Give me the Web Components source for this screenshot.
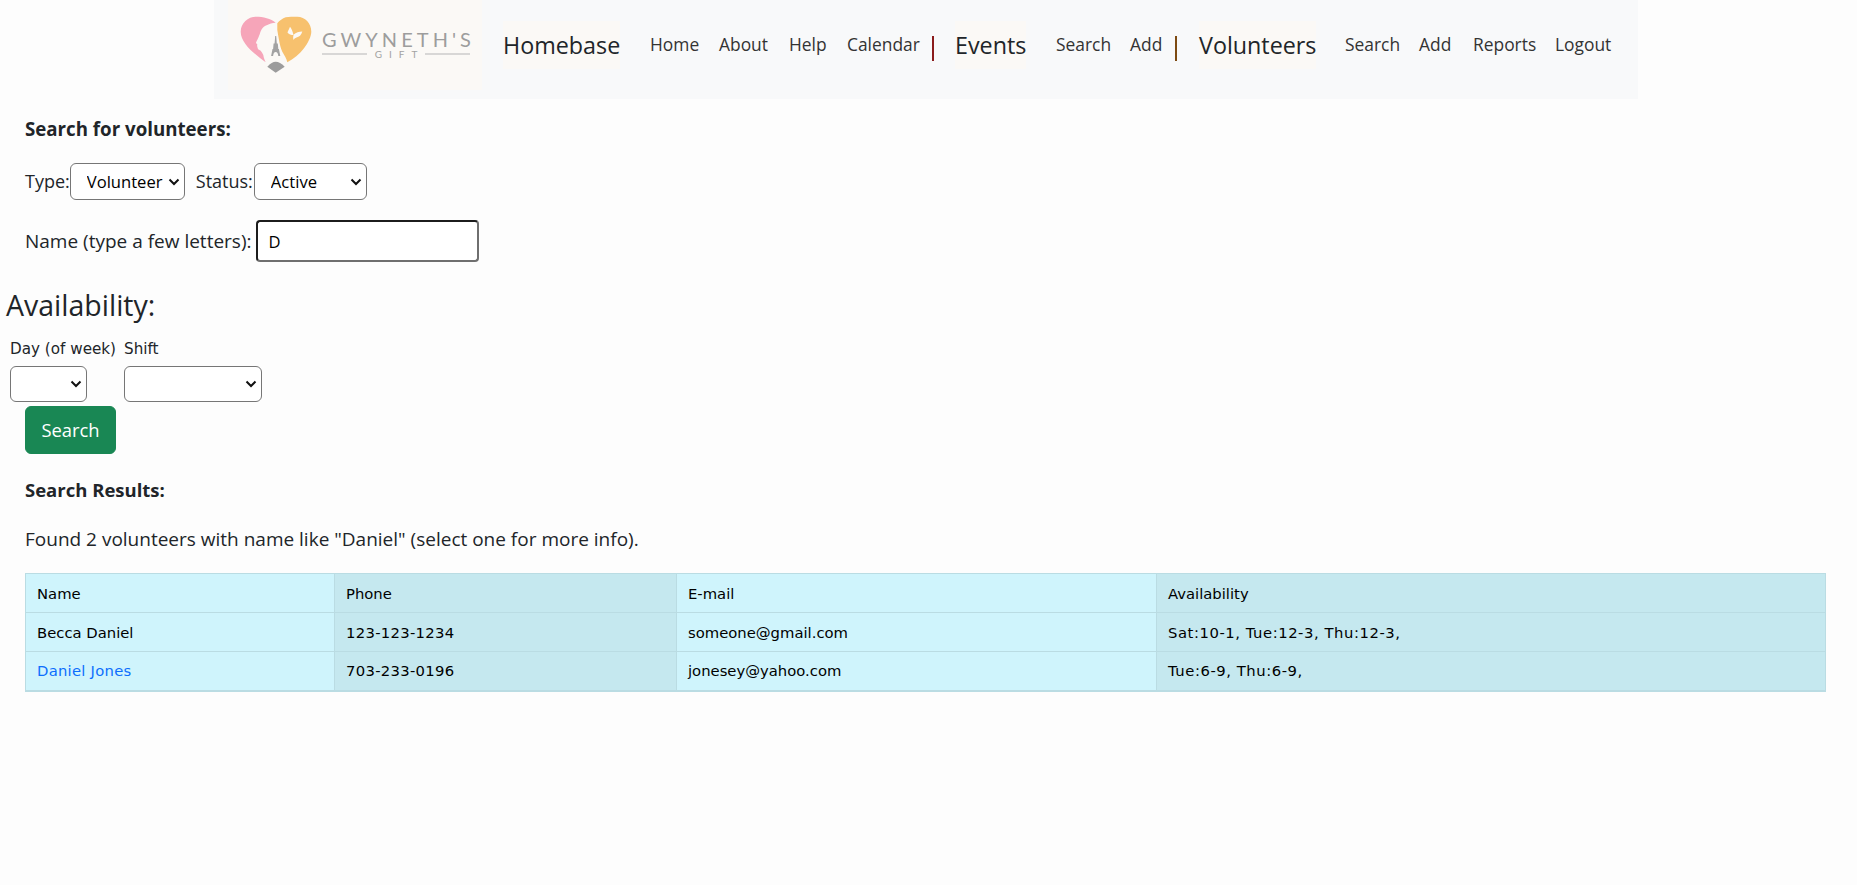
<!DOCTYPE html>
<html lang="en">
<head>
<meta charset="utf-8">
<title>Search for volunteers</title>
<style>
  html, body { margin: 0; background: #fdfdfd; color: #212529; font-family: "Open Sans", "Noto Sans", sans-serif; font-size: 19px; }
</style>
</head>
<body>
<gg-navbar>
  <gg-nav-title w="147">Homebase</gg-nav-title>
  <gg-nav-link w="69">Home</gg-nav-link>
  <gg-nav-link w="70">About</gg-nav-link>
  <gg-nav-link w="58">Help</gg-nav-link>
  <gg-nav-link w="85">Calendar</gg-nav-link>
  <gg-nav-sep w="23" color="#8b1c1c"></gg-nav-sep>
  <gg-nav-title w="101">Events</gg-nav-title>
  <gg-nav-link w="74">Search</gg-nav-link>
  <gg-nav-link w="45">Add</gg-nav-link>
  <gg-nav-sep w="24" color="#7d4a12"></gg-nav-sep>
  <gg-nav-title w="146">Volunteers</gg-nav-title>
  <gg-nav-link w="74">Search</gg-nav-link>
  <gg-nav-link w="54">Add</gg-nav-link>
  <gg-nav-link w="82">Reports</gg-nav-link>
  <gg-nav-link w="60">Logout</gg-nav-link>
</gg-navbar>
<gg-search-form></gg-search-form>
<gg-results></gg-results>

<script>
// helper: one template per element
const makeTemplate = (html) => {
  const t = document.createElement('template');
  t.innerHTML = html;
  return t;
};

class Base extends HTMLElement {
  constructor (template) {
    super();
    this.attachShadow({ mode: 'open' }).append(template.content.cloneNode(true));
  }
}

const navbarTemplate = makeTemplate(`
  <style>
  :host { display: block; width: 1424px; height: 99px; margin: 0 auto 0 214px; background: #f8f9fa; }
  .bar { display: flex; align-items: flex-start; height: 99px; }
  .brand { width: 254px; height: 90px; margin-left: 14px; margin-right: 21px; background: #fbf9f6; flex: none; position: relative; }
  svg { display: block; }
  .links { display: flex; align-items: center; height: 90px; }
  .word { position: absolute; left: 94px; top: 26px; font: 400 20px/26px Lato, sans-serif; letter-spacing: 4.05px; color: #9d9d9d; white-space: nowrap; }
  .gift { position: absolute; left: 94px; top: 48px; width: 148px; text-align: center; font: 400 10px/13px Lato, sans-serif; letter-spacing: 7px; text-indent: 7px; color: #a3a3a3; }
  </style>
  <div class="bar">
    <div class="brand">
      <svg width="254" height="90" viewBox="0 0 254 90">
        <!-- pink lobe, its right edge is the face profile -->
        <path d="M37.700 62.300 C28 55 12.700 44 12.700 31.700 C12.700 23 20 16.700 28 16.700 C35 16.700 43 18.500 47.700 22.700 C44 23 41.500 23.800 39.300 25 C36.500 26 34.800 27.500 33.700 29.300 C32.200 31.500 32.200 33.500 31 36 C30.200 38.500 28.800 40.500 28 42.700 C28.300 43.800 29.500 44 29.300 45 C28.800 46 29.500 46.500 29.700 48.300 C30 49.800 31.800 50 32.700 50.700 C33.800 52 34.500 53.500 35.300 55 C35.800 58 36.700 60.500 37.700 62.300 Z" fill="#f6a5b9"/>
        <path d="M59.300 62.300 C58.500 58.500 56.500 55.500 54.300 51.700 C52.500 47.500 51.700 44 51 40 C50.300 36.500 49.800 33 49.300 30 L49.300 23.300 C51.500 20.500 54.500 18.500 57.700 17.300 C61 16.700 65 16.700 69.300 16.700 C77 17 83.300 23 83.300 31.700 C83.300 36.500 80 43 76 48.300 C71.500 54 65.500 59 59.300 62.300 Z" fill="#f7c16e"/>
        <path d="M65.500 35 C64.500 31 63.500 28.500 62 26.700 C61 29 60 31 59.500 32.500 C61 34.500 63 35 65.500 35 Z M65.800 34.500 C68 32.500 71 31.500 74.300 31.500 C73.500 35 71 37 68.500 37.500 C67 38 66 39 65.500 40 C65 38 65 36 65.800 34.500 Z" fill="#fbf9f6"/>
        <path d="M47.200 36 H48.200 L48.800 43.500 H49.800 L50.300 49 H50.900 L52.300 56 H50.300 C50 53.500 49.200 52 47.700 52 C46.200 52 45.400 53.500 45.100 56 H43.100 L44.500 49 H45.100 L45.600 43.500 H46.600 Z" fill="#a2a2a2"/>
        <path d="M39.300 66.700 C42.500 63.500 45 61.700 47.700 61.700 C50.500 61.700 53.500 63.500 56.700 66.700 L47.700 72.700 Z" fill="#9c9c9c"/>
        <rect x="94" y="53.500" width="45" height="1" fill="#b5b5b5"/>
        <rect x="197" y="53.500" width="45" height="1" fill="#b5b5b5"/>
      </svg>
      <span class="word">GWYNETH'S</span>
      <span class="gift">GIFT</span>
    </div>
    <div class="links"><slot></slot></div>
  </div>
`);
class GgNavbar extends Base {
  constructor () { super(navbarTemplate); }
}
customElements.define('gg-navbar', GgNavbar);

const titleTemplate = makeTemplate(`
  <style>
  :host { display: block; flex: none; font-size: 23.3px; line-height: 32px; color: #212529; white-space: nowrap; }
  span { display: inline-block; background: #fbf9f6; padding: 8px 0; }
  </style>
  <span><slot></slot></span>
`);
class GgNavTitle extends Base {
  constructor () { super(titleTemplate); }
  connectedCallback () { this.style.width = `${this.getAttribute('w')}px`; }
}
customElements.define('gg-nav-title', GgNavTitle);

const linkTemplate = makeTemplate(`
  <style>
  :host { display: block; flex: none; font-size: 17.4px; line-height: 24px; padding-bottom: 2px; color: #333; white-space: nowrap; }
  </style>
  <slot></slot>
`);
class GgNavLink extends Base {
  constructor () { super(linkTemplate); }
  connectedCallback () { this.style.width = `${this.getAttribute('w')}px`; }
}
customElements.define('gg-nav-link', GgNavLink);

const sepTemplate = makeTemplate(`
  <style>
  :host { display: block; flex: none; height: 25px; margin-top: 7px; }
  div { width: 2px; height: 100%; }
  </style>
  <div></div>
`);
class GgNavSep extends Base {
  constructor () { super(sepTemplate); }
  connectedCallback () {
    this.style.width = `${this.getAttribute('w')}px`;
    this.shadowRoot.querySelector('div').style.background = this.getAttribute('color');
  }
}
customElements.define('gg-nav-sep', GgNavSep);

const selectTemplate = makeTemplate(`
  <style>
  :host { display: inline-block; position: relative; line-height: 0; vertical-align: top; font-size: 16.6px; }
  select {
    appearance: none; box-sizing: border-box; width: 100%; height: 100%; margin: 0;
    padding: 0 20px 0 16px; background: #fff; color: #000;
    border: 1px solid #767676; border-radius: 6px; font: inherit; line-height: normal;
  }
  svg { position: absolute; right: 5px; top: 50%; margin-top: -4px; pointer-events: none; }
  </style>
  <select></select>
  <svg width="12" height="8" viewBox="0 0 12 8"><path d="M1.500 1.500 L6 6 L10.500 1.500" fill="none" stroke="#111" stroke-width="2"/></svg>
`);
class GgSelect extends Base {
  constructor () { super(selectTemplate); }
  connectedCallback () {
    this.style.width = `${this.getAttribute('w')}px`;
    this.style.height = `${this.getAttribute('h')}px`;
    const select = this.shadowRoot.querySelector('select');
    (this.getAttribute('options') || '').split(',').forEach((label) => {
      const opt = document.createElement('option');
      opt.textContent = label;
      select.append(opt);
    });
  }
}
customElements.define('gg-select', GgSelect);

const formTemplate = makeTemplate(`
  <style>
  :host { display: block; padding: 16px 0 0 25px; font-size: 19px; line-height: 27px; color: #212529; }
  p { margin: 0; }
  .heading { font-size: 18.7px; font-weight: 700; margin-bottom: 21px; }
  .row { display: flex; align-items: center; height: 37px; font-size: 18px; }
  .row.name { height: 42px; margin-top: 20px; font-size: 19px; }
  .status-label { margin-left: 11px; margin-right: 1px; }
  input {
    box-sizing: border-box; width: 223px; height: 42px; margin-left: 4px; padding: 0 11px;
    background: #fff; color: #000; font: inherit; font-size: 16.6px;
    border: 2px solid; border-color: #1c1c1c #6f6f6f #6f6f6f #1c1c1c; border-radius: 4px; outline: none;
  }
  h2 { font-size: 28.5px; font-weight: 400; line-height: 34px; margin: 26px 0 0 -19px; }
  .avail-grid { display: grid; grid-template-columns: 114px 138px; margin: 18px 0 0 -15px; }
  .avail-grid label { font: 15.2px/18px "DejaVu Sans", Verdana, sans-serif; color: #212529; height: 26px; }
  button {
    display: block; box-sizing: border-box; width: 91px; height: 48px; margin: 4px 0 0; padding: 0 0 2px;
    background: #198754; color: #fff; border: 1px solid #198754; border-radius: 6px; font: inherit; font-size: 18.4px;
  }
  .results-head { font-size: 18.5px; font-weight: 700; margin-top: 22px; }
  .found { margin-top: 23px; }
  </style>
  <p class="heading">Search for volunteers:</p>
  <div class="row">
    <span>Type:</span><gg-select w="115" h="37" options="Volunteer"></gg-select>
    <span class="status-label">Status:</span><gg-select w="113" h="37" options="Active"></gg-select>
  </div>
  <div class="row name">
    <span>Name (type a few letters):</span><input type="text" value="D">
  </div>
  <h2>Availability:</h2>
  <div class="avail-grid">
    <label>Day (of week)</label><label>Shift</label>
    <gg-select w="77" h="36" options=""></gg-select><gg-select w="138" h="36" options=""></gg-select>
  </div>
  <button type="button">Search</button>
  <p class="results-head">Search Results:</p>
  <p class="found">Found 2 volunteers with name like "Daniel" (select one for more info).</p>
`);
class GgSearchForm extends Base {
  constructor () { super(formTemplate); }
}
customElements.define('gg-search-form', GgSearchForm);

const resultsTemplate = makeTemplate(`
  <style>
  :host { display: block; margin: 20px 31px 0 25px; }
  table { width: 100%; border-collapse: collapse; table-layout: fixed; font: 14.8px/18px "DejaVu Sans", Verdana, sans-serif; color: #000; border: 1px solid #badce3; border-bottom-width: 2px; }
  td { height: 39px; box-sizing: border-box; padding: 1px 10px 0 11px; background: #cff4fc; border: 1px solid #badce3; white-space: nowrap; }
  td:nth-child(even) { background: #c5e8ef; }
  .num { letter-spacing: 0.3px; }
  .avail { letter-spacing: 0.55px; }
  a { color: #0d6efd; text-decoration: none; letter-spacing: 0.25px; }
  </style>
  <table>
    <colgroup><col style="width:309px"><col style="width:342px"><col style="width:480px"><col></colgroup>
    <tbody>
      <tr><td>Name</td><td>Phone</td><td>E-mail</td><td>Availability</td></tr>
      <tr><td>Becca Daniel</td><td class="num">123-123-1234</td><td>someone@gmail.com</td><td class="avail">Sat:10-1, Tue:12-3, Thu:12-3,</td></tr>
      <tr><td><a href="#">Daniel Jones</a></td><td class="num">703-233-0196</td><td>jonesey@yahoo.com</td><td class="avail">Tue:6-9, Thu:6-9,</td></tr>
    </tbody>
  </table>
`);
class GgResults extends Base {
  constructor () { super(resultsTemplate); }
}
customElements.define('gg-results', GgResults);
</script>
</body>
</html>
